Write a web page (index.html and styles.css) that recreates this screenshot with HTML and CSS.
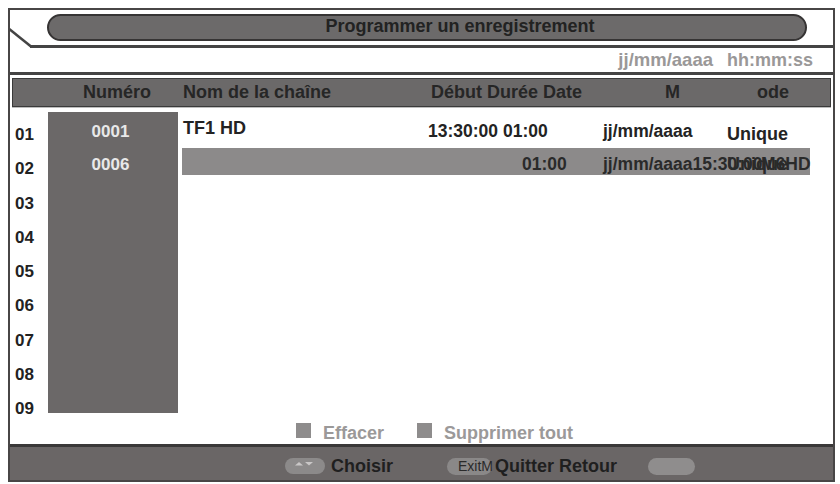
FILE: index.html
```html
<!DOCTYPE html>
<html lang="fr">
<head>
<meta charset="utf-8">
<title>Programmer un enregistrement</title>
<link rel="stylesheet" href="styles.css">
</head>
<body>
<div class="screen">
  <div class="titlebar">
    <svg class="notch" width="22" height="38" viewBox="0 0 22 38"><rect x="0" y="34" width="20" height="5" fill="#fff"/><line x1="-2" y1="18" x2="21" y2="36.5" stroke="#444" stroke-width="2.5"/></svg>
    <div class="titlepill">Programmer un enregistrement</div>
  </div>
  <div class="daterow"><span class="d-date">jj/mm/aaaa</span><span class="d-time">hh:mm:ss</span></div>
  <div class="headwrap">
    <div class="headbar">
      <span class="h-num">Numéro</span><span class="h-name">Nom de la chaîne</span><span class="h-time">Début Durée Date</span><span class="h-m">M</span><span class="h-ode">ode</span>
    </div>
  </div>
  <div class="list">
    <div class="nums">
      <div>01</div><div>02</div><div>03</div><div>04</div><div>05</div><div>06</div><div>07</div><div>08</div><div>09</div>
    </div>
    <div class="chcol"><div>0001</div><div>0006</div></div>
    <div class="entries">
      <div class="row1">
        <span class="c-name">TF1 HD</span><span class="c-time">13:30:00 01:00</span><span class="c-date">jj/mm/aaaa</span><span class="c-mode">Unique</span>
      </div>
      <div class="row2">
        <span class="c-dur">01:00</span>
        <span class="c-over"><span class="o-a">jj/mm/aaaa15:30:00</span><span class="o-b">Unique</span><span class="o-c">M6HD</span></span>
      </div>
    </div>
  </div>
  <div class="legend">
    <span class="sq"></span><span class="lg-1">Effacer</span><span class="sq"></span><span>Supprimer tout</span>
  </div>
  <div class="footer">
    <span class="pill1"><svg width="40" height="16" viewBox="0 0 40 16"><polygon points="10,7.5 14,4 18,7.5" fill="#c9c7c7"/><polygon points="20,4 28,4 24,7.5" fill="#c9c7c7"/></svg></span>
    <span class="choisir">Choisir</span>
    <span class="pill2">ExitM</span>
    <span class="quit">Quitter Retour</span>
    <span class="pill3"></span>
  </div>
</div>
</body>
</html>
```
FILE: styles.css
```css
body {
  margin: 0;
  background: #fff;
  font-family: "Liberation Sans", Arial, sans-serif;
  font-weight: 700;
  color: #232323;
}
.screen {
  box-sizing: border-box;
  width: 827px;
  height: 474px;
  margin: 8px 0 0 8px;
  border: 2px solid #484646;
  display: flex;
  flex-direction: column;
  overflow: hidden;
}
.titlebar {
  position: relative;
  height: 35px;
  border-bottom: 3px solid #444;
  flex: none;
}
.notch {
  position: absolute;
  left: 0;
  top: 0;
  overflow: visible;
}
.titlepill {
  box-sizing: border-box;
  margin: 4px 0 0 37px;
  width: 760px;
  height: 27px;
  border: 2px solid #363434;
  border-radius: 14px;
  background: #6c6a6a;
  font-size: 18px;
  line-height: 21px;
  text-align: center;
  padding-left: 66px;
  color: #222;
}
.daterow {
  height: 24px;
  border-bottom: 3px solid #444;
  display: flex;
  justify-content: flex-end;
  gap: 14px;
  padding-right: 20px;
  line-height: 24px;
  color: #9a9898;
  flex: none;
  white-space: nowrap;
}
.d-date { font-size: 18.5px; }
.d-time { font-size: 18px; }
.headwrap {
  padding: 3px 2px 4px 2px;
  flex: none;
}
.headbar {
  box-sizing: border-box;
  height: 29px;
  border: 1px solid #3a3a3a;
  background: #6b6969;
  box-shadow: 0 1px 0 #bdbdbd;
  display: flex;
  font-size: 18px;
  line-height: 27px;
  color: #262626;
  white-space: nowrap;
}
.headbar span { box-sizing: border-box; }
.h-num { width: 130px; margin-left: 39px; text-align: center; }
.h-name { width: 249px; padding-left: 1px; }
.h-time { width: 234px; }
.h-m { width: 92px; }
.list {
  display: flex;
  height: 311px;
  flex: none;
}
.nums {
  box-sizing: border-box;
  width: 38px;
  padding: 7px 0 0 5px;
  font-size: 17px;
  color: #222;
  flex: none;
}
.nums div { height: 34.3px; line-height: 34.3px; }
.chcol {
  box-sizing: border-box;
  width: 130px;
  height: 301px;
  margin-top: 1px;
  padding: 3px 5px 0 0;
  background: #6b6868;
  color: #e8e8e8;
  font-size: 17px;
  text-align: center;
  flex: none;
}
.chcol div { height: 33px; line-height: 33px; }
.entries { flex: 1; }
.row1 {
  display: flex;
  align-items: flex-start;
  height: 37px;
  font-size: 17.5px;
  line-height: 24px;
  white-space: nowrap;
}
.c-name { box-sizing: border-box; width: 250px; padding-left: 5px; margin-top: 5px; font-size: 18px; }
.c-time { width: 175px; margin-top: 8px; }
.c-date { width: 124px; margin-top: 8px; }
.c-mode { margin-top: 11px; font-size: 18px; }
.row2 {
  box-sizing: border-box;
  display: flex;
  align-items: flex-start;
  margin-left: 4px;
  width: 628px;
  height: 27px;
  padding-top: 5px;
  background: #8c8a8a;
  font-size: 17.5px;
  line-height: 22px;
  color: #2a2a2a;
  white-space: nowrap;
}
.c-dur { width: 80px; margin-left: 340px; flex: none; }
.c-over { display: grid; flex: 1; }
.c-over span { grid-area: 1 / 1; justify-self: start; }
.o-a { margin-left: 1px; }
.o-b { margin-left: 125px; font-size: 18px; }
.o-c { margin-left: 159px; }
.legend {
  height: 22px;
  display: flex;
  align-items: flex-start;
  padding-left: 286px;
  font-size: 18px;
  line-height: 22px;
  color: #9b9999;
  flex: none;
}
.sq {
  width: 15px;
  height: 15px;
  margin-top: 1px;
  margin-right: 12px;
  background: #8e8c8c;
}
.lg-1 { margin-right: 33px; }
.footer {
  box-sizing: border-box;
  flex: 1;
  border-top: 3px solid #3a3838;
  background: #6a6666;
  display: flex;
  align-items: center;
  padding-top: 5px;
  font-size: 18px;
  color: #1f1f1f;
  white-space: nowrap;
}
.pill1 {
  margin-left: 275px;
  width: 40px;
  height: 16px;
  border-radius: 8px;
  background: #8c8a8a;
  display: flex;
}
.choisir { margin-left: 6px; }
.pill2 {
  box-sizing: border-box;
  margin-left: 54px;
  width: 45px;
  height: 17px;
  border-radius: 9px;
  background: #8a8888;
  font-size: 14px;
  font-weight: 400;
  line-height: 17px;
  padding-left: 11px;
  color: #2a2a2a;
  overflow: visible;
  flex: none;
}
.quit { margin-left: 3px; }
.pill3 {
  margin-left: 31px;
  width: 47px;
  height: 17px;
  border-radius: 9px;
  background: #8f8d8d;
}
```
